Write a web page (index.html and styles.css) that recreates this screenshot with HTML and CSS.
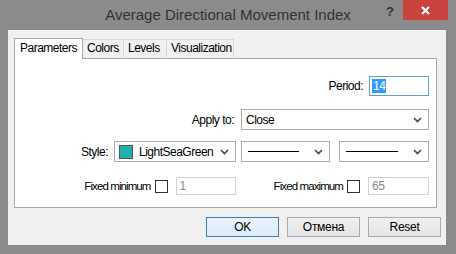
FILE: index.html
```html
<!DOCTYPE html>
<html lang="en">

<head>
    <meta charset="UTF-8">
    <title>Average Directional Movement Index</title>
    <link rel="stylesheet" href="styles.css">
</head>

<body>
    <div class="window">
        <div class="titlebar">
            <span></span>
            <div class="title">Average Directional Movement Index</div>
            <div class="controls">
                <span class="help">?</span>
                <span class="close">
                    <svg width="11" height="9" viewBox="0 0 11 9"><path d="M2 1 L9 8 M9 1 L2 8" stroke="#fff" stroke-width="2"/></svg>
                </span>
            </div>
        </div>

        <div class="client">
            <div class="tabs">
                <div class="tab active">Parameters</div>
                <div class="tab">Colors</div>
                <div class="tab">Levels</div>
                <div class="tab">Visualization</div>
            </div>

            <div class="panel">
                <div class="row row-period">
                    <label>Period:</label>
                    <div class="field period"><span class="sel">14</span></div>
                </div>

                <div class="row row-apply">
                    <label>Apply to:</label>
                    <div class="combo apply">
                        <span class="combo-text">Close</span>
                        <svg class="chev" width="9" height="6" viewBox="0 0 9 6"><path d="M1 1 L4.5 4.5 L8 1" fill="none" stroke="#444" stroke-width="1.6"/></svg>
                    </div>
                </div>

                <div class="row row-style">
                    <label>Style:</label>
                    <div class="combo color">
                        <span class="swatch"></span>
                        <span class="combo-text">LightSeaGreen</span>
                        <svg class="chev" width="9" height="6" viewBox="0 0 9 6"><path d="M1 1 L4.5 4.5 L8 1" fill="none" stroke="#444" stroke-width="1.6"/></svg>
                    </div>
                    <div class="combo line first">
                        <span class="line-sample"></span>
                        <svg class="chev" width="9" height="6" viewBox="0 0 9 6"><path d="M1 1 L4.5 4.5 L8 1" fill="none" stroke="#444" stroke-width="1.6"/></svg>
                    </div>
                    <div class="combo line second">
                        <span class="line-sample"></span>
                        <svg class="chev" width="9" height="6" viewBox="0 0 9 6"><path d="M1 1 L4.5 4.5 L8 1" fill="none" stroke="#444" stroke-width="1.6"/></svg>
                    </div>
                </div>

                <div class="row row-fixed">
                    <label>Fixed minimum</label>
                    <span class="check"></span>
                    <div class="field disabled min">1</div>
                    <label class="max-label">Fixed maximum</label>
                    <span class="check"></span>
                    <div class="field disabled max">65</div>
                </div>
            </div>

            <div class="buttons">
                <button class="btn default">OK</button>
                <button class="btn">Отмена</button>
                <button class="btn">Reset</button>
            </div>
        </div>
    </div>
</body>

</html>
```

FILE: styles.css
```css
body {
    margin: 0;
    font-family: 'Liberation Sans', Arial, sans-serif;
    font-size: 11px;
    letter-spacing: -0.5px;
    color: #000;
}

.window {
    width: 456px;
    height: 254px;
    background-color: #8b8b8b;
    padding: 0 10px 9px 8px;
    box-sizing: border-box;
    display: flex;
    flex-direction: column;
}

.titlebar {
    height: 30px;
    display: grid;
    grid-template-columns: 1fr auto 1fr;
    margin: 0 -10px 0 -8px;
}

.title {
    font-size: 15px;
    letter-spacing: 0;
    color: #333;
    line-height: 30px;
}

.controls {
    display: flex;
    justify-content: flex-end;
    align-items: flex-start;
    padding-right: 8px;
}

.help {
    font-size: 13px;
    font-weight: bold;
    color: #333;
    letter-spacing: 0;
    margin-top: 4px;
    margin-right: 9px;
}

.close {
    width: 45px;
    height: 20px;
    background-color: #c9443d;
    display: flex;
    align-items: center;
    justify-content: center;
}

.client {
    flex: 1;
    background-color: #f0f0f0;
    padding: 8px 5px 0 6px;
    display: flex;
    flex-direction: column;
}

.tabs {
    display: flex;
    align-items: flex-end;
    height: 20px;
    position: relative;
    z-index: 1;
}

.tab {
    height: 17px;
    line-height: 17px;
    padding: 0 4px;
    background-color: #f0f0f0;
    border: 1px solid #d9d9d9;
    border-bottom: none;
    margin-bottom: 1px;
    font-size: 12px;
}

.tab + .tab {
    border-left: none;
}

.tab.active {
    height: 20px;
    line-height: 19px;
    background-color: #fff;
    border-color: #a9a9a9;
    margin-bottom: -1px;
    padding: 0 5px;
    width: 57px;
}

.tab:nth-child(2) { width: 32px; }
.tab:nth-child(3) { width: 34px; }
.tab:nth-child(4) { width: 58px; }

.panel {
    height: 150px;
    width: 423px;
    background-color: #fff;
    border: 1px solid #a9a9a9;
    box-sizing: border-box;
    padding: 17px 7px 0 0;
    display: flex;
    flex-direction: column;
}

.row {
    display: flex;
    justify-content: flex-end;
    align-items: center;
}

.row label {
    font-size: 12px;
}

.row-apply { margin-top: 13px; }
.row-style { margin-top: 11px; }
.row-fixed { margin-top: 15px; }

.row-fixed label {
    font-size: 11.5px;
    letter-spacing: -0.9px;
}

.field {
    height: 20px;
    box-sizing: border-box;
    border: 1px solid #abadb3;
    background-color: #fff;
    font-size: 12px;
    padding: 0 3px;
    display: flex;
    align-items: center;
}

.period {
    width: 60px;
    margin-left: 6px;
    border-color: #5c9ddb;
    padding-left: 2px;
}

.sel {
    background-color: #3399ff;
    color: #fff;
    line-height: 14px;
    padding: 0 1px;
}

.combo {
    height: 21px;
    box-sizing: border-box;
    border: 1px solid #acacac;
    background-color: #fff;
    display: flex;
    align-items: center;
    padding: 0 6px 0 4px;
    font-size: 12px;
}

.combo-text {
    flex: 1;
}

.apply {
    width: 188px;
    margin-left: 7px;
}

.color {
    width: 122px;
    margin-left: 6px;
}

.swatch {
    width: 12px;
    height: 12px;
    background-color: #20b2aa;
    border: 1px solid #555;
    margin-right: 6px;
}

.line {
    padding-left: 6px;
}

.first {
    width: 89px;
    margin-left: 5px;
}

.second {
    width: 90px;
    margin-left: 9px;
}

.line-sample {
    flex: 1;
    height: 1px;
    background-color: #000;
    margin-right: 15px;
}

.row-fixed .field {
    height: 18px;
}

.check {
    width: 11px;
    height: 11px;
    border: 1px solid #333;
    background-color: #fff;
    margin-left: 4px;
}

.disabled {
    border-color: #d2d2d2;
    color: #8a8a8a;
    margin-left: 8px;
}

.min {
    width: 60px;
}

.max-label {
    margin-left: 38px;
}

.max {
    width: 61px;
}

.buttons {
    display: flex;
    justify-content: flex-end;
    gap: 8px;
    margin-top: 9px;
}

.btn {
    width: 73px;
    height: 20px;
    border: 1px solid #acacac;
    background: linear-gradient(#f0f0f0, #e5e5e5);
    font-family: 'Liberation Sans', Arial, sans-serif;
    font-size: 12px;
    letter-spacing: -0.3px;
    color: #000;
    padding: 0;
}

.btn.default {
    border-color: #3c7fb1;
    background: linear-gradient(#eaf4fc, #dcecfc);
}
```
